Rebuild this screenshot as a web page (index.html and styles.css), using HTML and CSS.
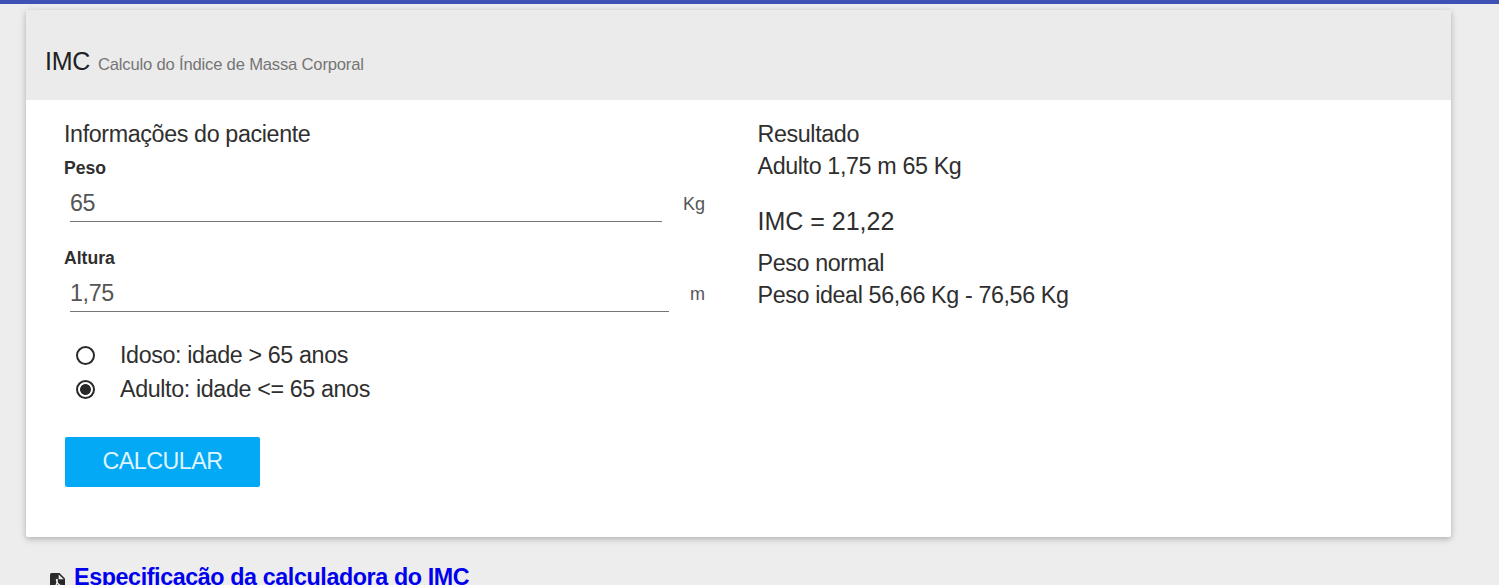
FILE: index.html
```
<!DOCTYPE html>
<html lang="pt-BR">
<head>
<meta charset="utf-8">
<title>IMC</title>
<link rel="stylesheet" href="styles.css">
</head>
<body>
<div class="topbar"></div>
<main class="card">
  <header class="card-header"><span class="title">IMC</span><span class="subtitle">Calculo do Índice de Massa Corporal</span></header>
  <div class="card-body">
    <form class="form">
      <div class="line">Informações do paciente</div>
      <div class="label">Peso</div>
      <div class="field"><span class="value">65</span><span class="unit">Kg</span></div>
      <div class="label label-next">Altura</div>
      <div class="field"><span class="value">1,75</span><span class="unit">m</span></div>
      <div class="options">
        <div class="option"><span class="radio"></span><span>Idoso: idade &gt; 65 anos</span></div>
        <div class="option"><span class="radio checked"></span><span>Adulto: idade &lt;= 65 anos</span></div>
      </div>
      <button class="button" type="button">CALCULAR</button>
    </form>
    <section class="result">
      <div class="line">Resultado</div>
      <div class="line">Adulto 1,75 m 65 Kg</div>
      <div class="imc">IMC = 21,22</div>
      <div class="line">Peso normal</div>
      <div class="line">Peso ideal 56,66 Kg - 76,56 Kg</div>
    </section>
  </div>
</main>
<footer class="spec">
  <svg class="pdf" viewBox="0 0 15 20"><path fill="#292929" d="M1.500 0H9.500L15 5.500V18.500Q15 20 13.500 20H1.500Q0 20 0 18.500V1.500Q0 0 1.500 0Z"/><path fill="#ededed" d="M8.700 1.400v4.900h5Z"/><path fill="none" stroke="#ededed" stroke-width="1.300" d="M6.500 6q-.2 2.500 1.300 4.500t5 3M6.700 6q1.300 1-.2 5T3 15.500q0-2 9-3"/></svg>
  <a class="link">Especificação da calculadora do IMC</a>
</footer>
</body>
</html>
```
FILE: styles.css
```
html { height: 100%; overflow: hidden; }
body { margin: 0; height: 585px; overflow: hidden; background: #ededed; color: #2f2f2f; font-family: "Liberation Sans", Arial, sans-serif; font-size: 23.3px; letter-spacing: -.38px; }
.topbar { height: 4px; background: #3f51b5; }
.card { box-sizing: border-box; width: 1425px; height: 527px; margin: 6px 0 0 26px; background: #fff; border-radius: 2px; box-shadow: 0 2px 5px 0 rgba(0,0,0,.16), 0 2px 10px 0 rgba(0,0,0,.12); }
.card-header { box-sizing: border-box; height: 90px; padding: 36px 19px 0; background: #ebebeb; border-radius: 2px 2px 0 0; display: flex; align-items: baseline; gap: 8px; line-height: 30px; }
.title { font-size: 25px; color: #212121; letter-spacing: -.3px; }
.subtitle { font-size: 16.6px; color: #757575; letter-spacing: -.18px; }
.card-body { display: flex; padding: 18px 38px 0; }
.form { width: 641px; margin-right: 52.500px; }
.line { line-height: 32px; white-space: nowrap; }
.label { font-size: 17.6px; font-weight: bold; line-height: 24px; padding-top: 6px; height: 24px; letter-spacing: 0; }
.label-next { margin-top: 18px; }
.field { display: flex; height: 42px; gap: 21px; padding-left: 6px; align-items: flex-start; color: #555; }
.value { flex: 1; box-sizing: border-box; height: 42px; padding-top: 8px; border-bottom: 1px solid #757575; line-height: 30px; letter-spacing: -.35px; }
.unit { font-size: 18px; line-height: 30px; padding-top: 9px; letter-spacing: 0; }
.options { padding: 26px 0 0 12px; }
.option { display: flex; align-items: center; gap: 25px; height: 34px; }
.radio { box-sizing: border-box; width: 19px; height: 19px; border: 2px solid #292929; border-radius: 50%; }
.checked { background: radial-gradient(circle, #292929 0 5px, #fff 5.800px); }
.button { display: block; width: 195px; height: 50px; margin: 31px 0 0 1px; padding: 0 0 2px; border: 0; border-radius: 2px; background: #03a9f4; color: #def4fe; font: 23.3px "Liberation Sans", Arial, sans-serif; letter-spacing: -.53px; }
.imc { font-size: 25px; line-height: 34px; padding: 22px 0 9px; letter-spacing: 0; }
.spec { display: flex; gap: 9px; padding: 24px 0 0 50px; }
.pdf { width: 15px; height: 20px; margin-top: 12px; }
.link { color: #0000ee; font-weight: bold; line-height: 32px; letter-spacing: -.4px; }
```
